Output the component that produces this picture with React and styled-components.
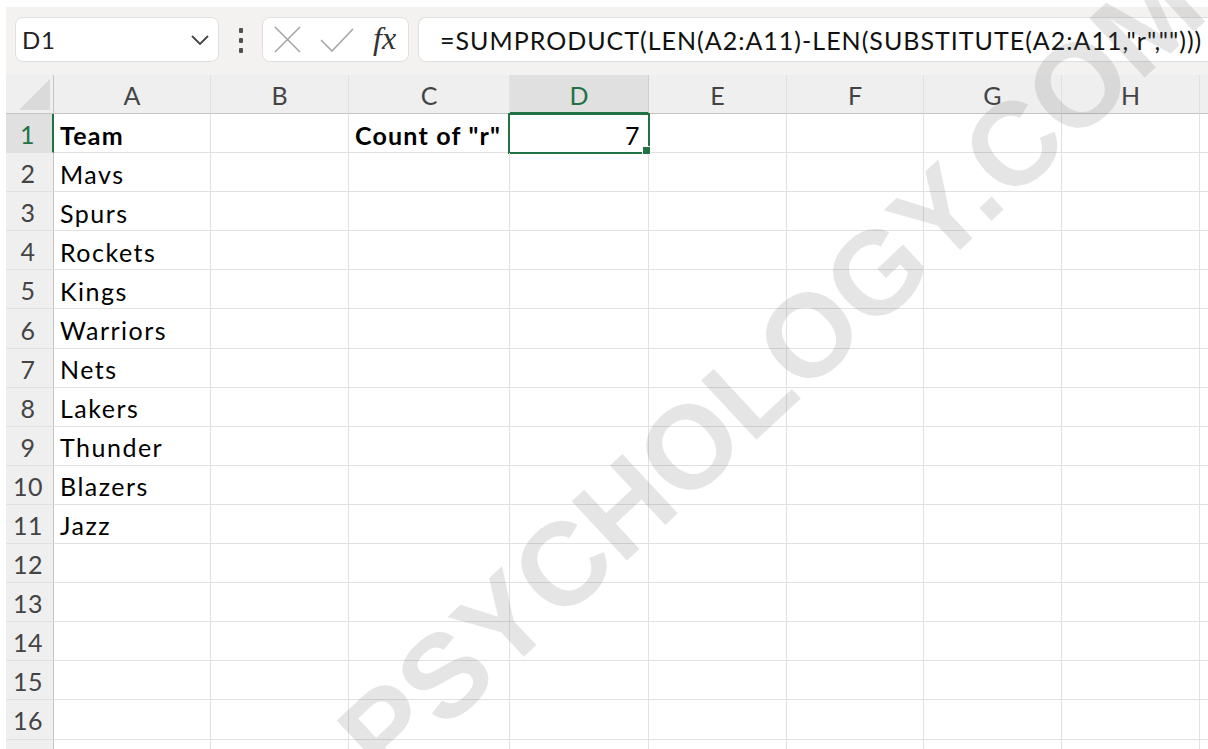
import React from "react"
import styled, { createGlobalStyle } from "styled-components"

const GlobalStyle = createGlobalStyle`
    html, body {
        margin: 0;
        padding: 0;
        background: #ffffff;
        font-family: Lato, "Open Sans", sans-serif;
    }
`

const GREEN = "#217346"
const GRID = "#e1e1e1"
const EDGE = "#c4c4c4"

const Frame = styled.div`
    position: relative;
    width: 1208px;
    height: 749px;
    overflow: hidden;
    padding: 7px 0 0 6px;
    box-sizing: border-box;
    background: #ffffff;
`

const Toolbar = styled.div`
    display: flex;
    align-items: flex-start;
    height: 68px;
    padding: 10px 0 0 9px;
    box-sizing: border-box;
    background: #f3f2f1;
`

const Box = styled.div`
    display: flex;
    align-items: center;
    height: 45px;
    box-sizing: border-box;
    background: #ffffff;
    border: 1px solid #e1dfdd;
    border-radius: 8px;
`

const NameBox = styled(Box)`
    width: 204px;
    padding: 0 8px 0 6px;
    justify-content: space-between;
    font-size: 24px;
    letter-spacing: 0.8px;
    color: #222;
`

const Grip = styled.div`
    width: 43px;
    display: flex;
    flex-direction: column;
    align-items: center;
    gap: 5px;
    padding-top: 11px;

    span {
        width: 4px;
        height: 5px;
        border-radius: 1px;
        background: #505050;
    }
`

const FxBox = styled(Box)`
    width: 147px;
    padding: 0 8px 0 11px;
    gap: 19px;
`

const FxLabel = styled.span`
    font-family: "Liberation Serif", serif;
    font-style: italic;
    font-size: 32px;
    color: #333;
    line-height: 1;
    padding-bottom: 4px;
`

const FormulaBox = styled(Box)`
    flex: 1;
    margin-left: 9px;
    padding-left: 21px;
    border-right: none;
    border-radius: 8px 0 0 8px;
    font-size: 25px;
    letter-spacing: 1px;
    color: #111;
    white-space: nowrap;
    overflow: hidden;
`

const Sheet = styled.div`
    display: grid;
    grid-template-columns: 48px 157px 138px 161px 139px 138px 137px 138px 138px 1fr;
    grid-template-rows: 39px;
    grid-auto-rows: 39.1px;
`

const Corner = styled.div`
    position: relative;
    background: #efefef;
    border-right: 1px solid ${EDGE};
    border-bottom: 1px solid ${EDGE};

    &::after {
        content: "";
        position: absolute;
        right: 3px;
        bottom: 3px;
        width: 0;
        height: 0;
        border-left: 31px solid transparent;
        border-bottom: 31px solid #dadada;
    }
`

const ColHead = styled.div`
    display: flex;
    align-items: center;
    justify-content: center;
    font-size: 25px;
    padding-top: 2px;
    box-sizing: border-box;
    color: ${p => (p.$active ? GREEN : "#444")};
    background: ${p => (p.$active ? "#e0e0e0" : "#efefef")};
    border-right: 1px solid ${p => (p.$active ? "#cfcfcf" : GRID)};
    border-bottom: ${p => (p.$active ? `2px solid ${GREEN}` : `1px solid ${EDGE}`)};
`

const RowHead = styled.div`
    display: flex;
    align-items: center;
    justify-content: center;
    font-size: 25px;
    letter-spacing: 0.6px;
    padding: 2px 3px 0 0;
    box-sizing: border-box;
    color: ${p => (p.$active ? GREEN : "#444")};
    background: ${p => (p.$active ? "#e0e0e0" : "#efefef")};
    border-bottom: 1px solid ${GRID};
    border-right: ${p => (p.$active ? `2px solid ${GREEN}` : `1px solid ${EDGE}`)};
`

const Cell = styled.div`
    position: relative;
    display: flex;
    align-items: center;
    justify-content: ${p => (p.$num ? "flex-end" : "flex-start")};
    padding: 3px 7px 0 6px;
    box-sizing: border-box;
    font-size: 25px;
    letter-spacing: ${p => (p.$bold ? "1.2px" : "1.5px")};
    font-weight: ${p => (p.$bold ? 700 : 400)};
    color: #000;
    white-space: nowrap;
    border-right: 1px solid ${GRID};
    border-bottom: 1px solid ${GRID};

    ${p => p.$selected && `
        &::after {
            content: "";
            position: absolute;
            left: -2px;
            top: -1px;
            right: -2px;
            bottom: -2px;
            border: 2px solid ${GREEN};
            pointer-events: none;
        }
        &::before {
            content: "";
            position: absolute;
            right: -3px;
            bottom: -3px;
            width: 7px;
            height: 7px;
            background: ${GREEN};
            border: 1px solid #fff;
            z-index: 2;
        }
    `}
`

const Watermark = styled.div`
    position: absolute;
    left: 318px;
    top: 712px;
    transform-origin: 0 0;
    transform: rotate(-43deg);
    font-family: "Liberation Sans", Arial, sans-serif;
    font-weight: 700;
    font-size: 118px;
    line-height: 1;
    white-space: nowrap;
    color: rgba(110, 110, 110, 0.18);
    pointer-events: none;
`

const columns = ["A", "B", "C", "D", "E", "F", "G", "H", ""]
const teams = ["Team", "Mavs", "Spurs", "Rockets", "Kings", "Warriors", "Nets", "Lakers", "Thunder", "Blazers", "Jazz"]

// row 17 only peeks in at the bottom edge, its number sits below the fold
const ROWS = 17
const VISIBLE_NUMBERS = 16

const cellFor = (row, col) => {
    if (col === 0) return { text: teams[row - 1] || "", bold: row === 1 }
    if (row === 1 && col === 2) return { text: 'Count of "r"', bold: true }
    if (row === 1 && col === 3) return { text: "7", num: true, selected: true }
    return { text: "" }
}

export default function App() {
    const rows = Array.from({ length: ROWS }, (_, i) => i + 1)

    return (
        <Frame>
            <GlobalStyle />
            <Toolbar>
                <NameBox>
                    <span>D1</span>
                    <svg width="20" height="12" viewBox="0 0 20 12">
                        <path d="M2 2 L10 10 L18 2" fill="none" stroke="#444" strokeWidth="1.8" />
                    </svg>
                </NameBox>
                <Grip>
                    <span />
                    <span />
                    <span />
                </Grip>
                <FxBox>
                    <svg width="27" height="27" viewBox="0 0 27 27">
                        <path d="M1 1 L26 26 M26 1 L1 26" fill="none" stroke="#a6a6a6" strokeWidth="1.6" />
                    </svg>
                    <svg width="34" height="24" viewBox="0 0 34 24">
                        <path d="M1 12 L12 23 L33 1" fill="none" stroke="#a6a6a6" strokeWidth="1.6" />
                    </svg>
                    <FxLabel>fx</FxLabel>
                </FxBox>
                <FormulaBox>=SUMPRODUCT(LEN(A2:A11)-LEN(SUBSTITUTE(A2:A11,"r","")))</FormulaBox>
            </Toolbar>
            <Sheet>
                <Corner />
                {columns.map((c, i) => (
                    <ColHead key={i} $active={c === "D"}>{c}</ColHead>
                ))}
                {rows.map(r => (
                    <React.Fragment key={r}>
                        <RowHead $active={r === 1}>{r <= VISIBLE_NUMBERS ? r : ""}</RowHead>
                        {columns.map((_, c) => {
                            const cell = cellFor(r, c)
                            return (
                                <Cell key={c} $bold={cell.bold} $num={cell.num} $selected={cell.selected}>
                                    {cell.text}
                                </Cell>
                            )
                        })}
                    </React.Fragment>
                ))}
            </Sheet>
            <Watermark>PSYCHOLOGY.COM</Watermark>
        </Frame>
    )
}
